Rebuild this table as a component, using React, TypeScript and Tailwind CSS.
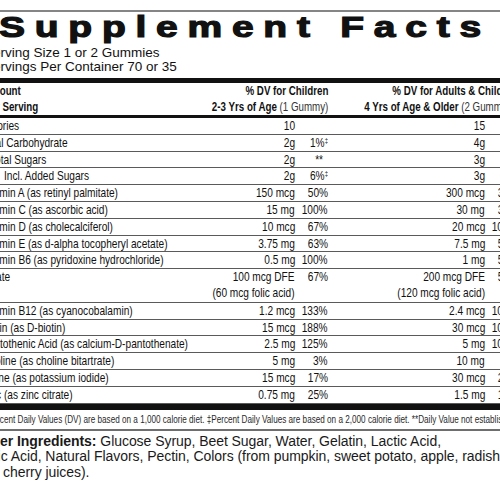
import React from "react"

// no narrow face installed, so the condensed label type is squeezed horizontally
function N({ children, right, sx = "scale-x-[0.75]" }: { children: React.ReactNode; right?: boolean; sx?: string }) {
    return (
        <span className={`inline-block ${sx} ${right ? "origin-right text-right" : "origin-left"}`}>
            {children}
        </span>
    )
}

type Row = {
    label: React.ReactNode
    indent?: string
    ca: React.ReactNode
    cp?: React.ReactNode
    aa: React.ReactNode
    ap?: React.ReactNode
    tall?: boolean
}

const dagger = <sup className="text-[8px]">‡</sup>

const rows: Row[] = [
    { label: "Calories", ca: "10", aa: "15" },
    { label: "Total Carbohydrate", ca: "2g", cp: <>1%{dagger}</>, aa: "4g", ap: <>1%{dagger}</> },
    { label: "Total Sugars", indent: "pl-[8px]", ca: "2g", cp: <span className="pr-[6px]">**</span>, aa: "3g", ap: <span className="pr-[6px]">**</span> },
    { label: "Incl. Added Sugars", indent: "pl-[22px]", ca: "2g", cp: <>6%{dagger}</>, aa: "3g", ap: <>6%{dagger}</> },
    { label: "Vitamin A (as retinyl palmitate)", ca: "150 mcg", cp: "50%", aa: "300 mcg", ap: "33%" },
    { label: "Vitamin C (as ascorbic acid)", ca: "15 mg", cp: "100%", aa: "30 mg", ap: "33%" },
    { label: "Vitamin D (as cholecalciferol)", ca: "10 mcg", cp: "67%", aa: "20 mcg", ap: "100%" },
    { label: "Vitamin E (as d-alpha tocopheryl acetate)", ca: "3.75 mg", cp: "63%", aa: "7.5 mg", ap: "50%" },
    { label: "Vitamin B6 (as pyridoxine hydrochloride)", ca: "0.5 mg", cp: "100%", aa: "1 mg", ap: "59%" },
    {
        label: "Folate",
        ca: <>100 mcg DFE<br />(60 mcg folic acid)</>,
        cp: "67%",
        aa: <>200 mcg DFE<br />(120 mcg folic acid)</>,
        ap: "50%",
        tall: true,
    },
    { label: "Vitamin B12 (as cyanocobalamin)", ca: "1.2 mcg", cp: "133%", aa: "2.4 mcg", ap: "100%" },
    { label: "Biotin (as D-biotin)", ca: "15 mcg", cp: "188%", aa: "30 mcg", ap: "100%" },
    { label: "Pantothenic Acid (as calcium-D-pantothenate)", ca: "2.5 mg", cp: "125%", aa: "5 mg", ap: "100%" },
    { label: "Choline (as choline bitartrate)", ca: "5 mg", cp: "3%", aa: "10 mg", ap: "2%" },
    { label: "Iodine (as potassium iodide)", ca: "15 mcg", cp: "17%", aa: "30 mcg", ap: "20%" },
    { label: "Zinc (as zinc citrate)", ca: "0.75 mg", cp: "25%", aa: "1.5 mg", ap: "14%" },
]

function FactRow({ row }: { row: Row }) {
    return (
        <div className={`flex border-b border-[#5a5a5a] leading-[15.6px] whitespace-nowrap ${row.tall ? "h-[33.6px]" : "h-[16.8px]"}`}>
            <div className={`min-w-0 flex-1 ${row.indent ?? ""}`}><N>{row.label}</N></div>
            <div className="flex w-[95px] shrink-0 justify-end"><N right>{row.ca}</N></div>
            <div className="flex w-[33px] shrink-0 justify-end"><N right>{row.cp}</N></div>
            <div className="flex w-[157px] shrink-0 justify-end"><N right>{row.aa}</N></div>
            <div className="flex w-[33px] shrink-0 justify-end"><N right>{row.ap}</N></div>
        </div>
    )
}

export default function App() {
    return (
        <div className="w-[500px] h-[500px] overflow-hidden bg-white text-[#111]">
            <div className="ml-[-18px] w-[536px] pt-[10px]">
                <div className="h-[2px] bg-[#858585]" />

                <div className="h-[30px] pl-[17px] whitespace-nowrap">
                    <span className="inline-block origin-left scale-x-[1.3] font-['Liberation_Sans',sans-serif] text-[30px] leading-[30px] font-bold tracking-[7.5px] [-webkit-text-stroke:1.2px_#111]">
                        Supplement Facts
                    </span>
                </div>

                <div className="mt-[4px] pl-[2px] font-['Liberation_Sans',sans-serif] text-[13.5px] leading-[14px]">
                    <div>Serving Size 1 or 2 Gummies</div>
                    <div>Servings Per Container 70 or 35</div>
                </div>

                <div className="mt-[4px] h-[5px] bg-[#111]" />

                <div className="font-['Liberation_Sans',sans-serif] text-[13.5px]">
                    <div className="flex h-[32px] text-[12.5px] font-bold leading-[16px] whitespace-nowrap">
                        <div className="min-w-0 flex-1 pl-[2px]"><N sx="scale-x-[0.78]">Amount<br />Per Serving</N></div>
                        <div className="flex justify-end">
                            <N right sx="scale-x-[0.78]">
                                % DV for Children<br />
                                2-3 Yrs of Age <span className="font-normal text-[#333]">(1 Gummy)</span>
                            </N>
                        </div>
                        <div className="flex w-[190px] shrink-0 justify-end">
                            <N right sx="scale-x-[0.78]">
                                % DV for Adults &amp; Children<br />
                                4 Yrs of Age &amp; Older <span className="font-normal text-[#333]">(2 Gummies)</span>
                            </N>
                        </div>
                    </div>
                    <div className="h-[3px] bg-[#111]" />

                    {rows.map((r, i) => <FactRow key={i} row={r} />)}

                    <div className="h-[6px] bg-[#111]" />

                    <div className="flex h-[19px] items-center pl-[2px] whitespace-nowrap text-[10px] text-[#2a2a2a]">
                        <span className="inline-block origin-left scale-x-[0.815]">
                            *Percent Daily Values (DV) are based on a 1,000 calorie diet. ‡Percent Daily Values are based on a 2,000 calorie diet. **Daily Value not established.
                        </span>
                    </div>
                </div>

                <div className="h-[2px] bg-[#6e6e6e]" />

                <p className="mt-[3px] ml-[-6px] whitespace-nowrap font-['Liberation_Sans',sans-serif] text-[14px] leading-[15.5px] tracking-[-0.05px] text-[#1a1a1a]">
                    <b>Other Ingredients:</b> Glucose Syrup, Beet Sugar, Water, Gelatin, Lactic Acid,<br />
                    Citric Acid, Natural Flavors, Pectin, Colors (from pumpkin, sweet potato, apple, radish,<br />
                    and cherry juices).
                </p>
            </div>
        </div>
    )
}
